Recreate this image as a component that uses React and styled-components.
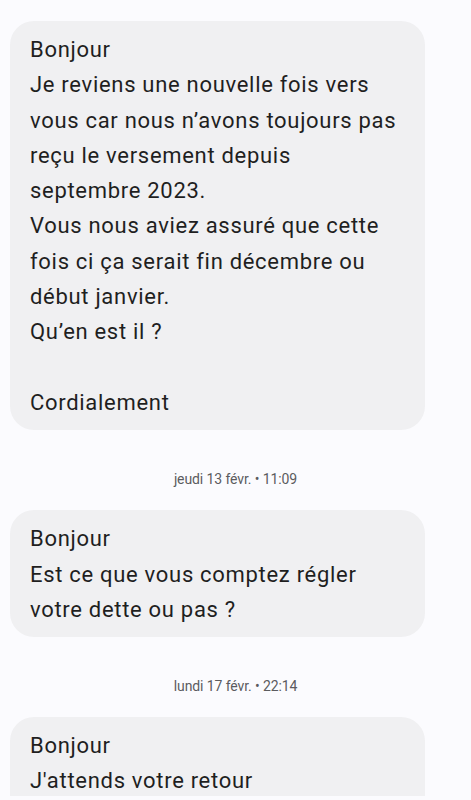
import React from 'react';
import styled, { createGlobalStyle } from 'styled-components';

const GlobalStyle = createGlobalStyle`
  html, body {
    margin: 0;
    padding: 0;
    background: #fbfbfe;
  }
  body {
    font-family: Roboto, "Noto Sans", sans-serif;
    color: #1f1f1f;
  }
`;

const messages = [
  {
    stamp: null,
    lines: [
      'Bonjour',
      'Je reviens une nouvelle fois vers',
      'vous car nous n\u2019avons toujours pas',
      're\u00e7u le versement depuis',
      'septembre 2023.',
      'Vous nous aviez assur\u00e9 que cette',
      'fois ci \u00e7a serait fin d\u00e9cembre ou',
      'd\u00e9but janvier.',
      'Qu\u2019en est il ?',
      '',
      'Cordialement',
    ],
  },
  {
    stamp: 'jeudi 13 f\u00e9vr. \u2022 11:09',
    lines: ['Bonjour', 'Est ce que vous comptez r\u00e9gler', 'votre dette ou pas ?'],
  },
  {
    stamp: 'lundi 17 f\u00e9vr. \u2022 22:14',
    lines: ['Bonjour', 'J\'attends votre retour', ''],
  },
];

function App() {
  return (
    <>
      <GlobalStyle />
      <Viewport>
        <Thread>
          {messages.map((msg, i) => (
            <React.Fragment key={i}>
              {msg.stamp && <Stamp>{msg.stamp}</Stamp>}
              <Bubble>
                {msg.lines.map((line, j) => (
                  <Line key={j}>{line || '\u00a0'}</Line>
                ))}
              </Bubble>
            </React.Fragment>
          ))}
        </Thread>
      </Viewport>
    </>
  );
}

const Viewport = styled.div`
  height: 796px;
  overflow: hidden;
`;

const Thread = styled.div`
  display: flex;
  flex-direction: column;
  align-items: flex-start;
  padding: 21px 46px 0 10px;
`;

const Bubble = styled.div`
  box-sizing: border-box;
  width: 415px;
  padding: 11px 20px 10px;
  background: #f0f0f2;
  border-radius: 24px;
`;

const Line = styled.div`
  font-size: 22px;
  line-height: 35.3px;
  letter-spacing: 0.7px;
  white-space: nowrap;
`;

const Stamp = styled.div`
  align-self: center;
  margin: 39px 0 21px 36px;
  font-size: 14px;
  line-height: 20px;
  color: #5b5b5f;
  letter-spacing: -0.1px;
`;

export default App;
